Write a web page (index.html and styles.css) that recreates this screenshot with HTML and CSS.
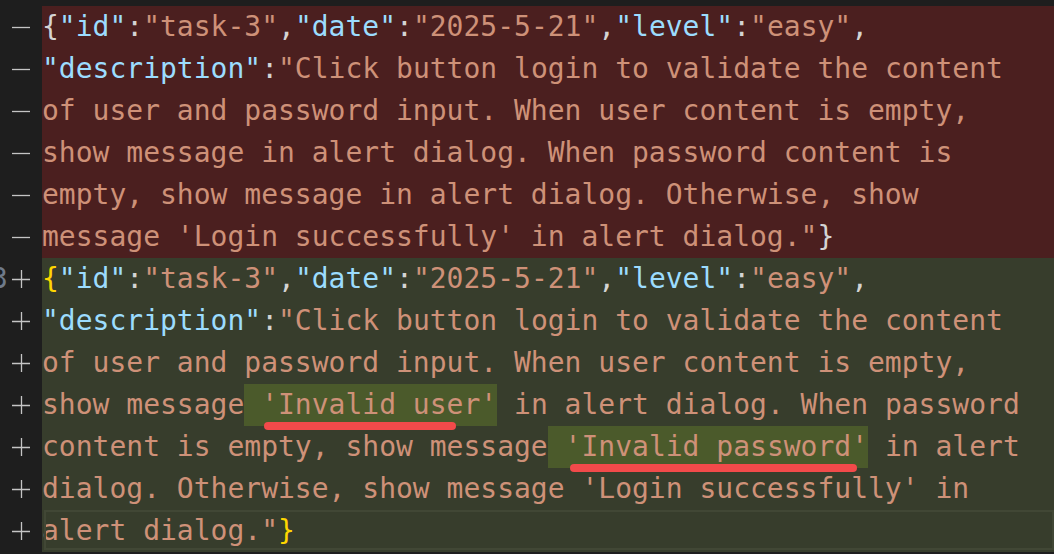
FILE: index.html
```html
<!DOCTYPE html>
<html lang="en">
<head>
<meta charset="UTF-8">
<meta name="viewport" content="width=device-width, initial-scale=1.0">
<title>Diff - tasks.jsonl</title>
<link rel="stylesheet" href="styles.css">
</head>
<body>

<div class="diff">
  <!-- removed lines -->
  <div class="row del">
    <div class="gutter"><svg class="sign" width="18" height="18" viewBox="0 0 18 18"><path d="M0 9.5H18"/></svg></div>
    <div class="code"><span class="p">{</span><span class="k">"id"</span><span class="p">:</span><span class="s">"task-3"</span><span class="p">,</span><span class="k">"date"</span><span class="p">:</span><span class="s">"2025-5-21"</span><span class="p">,</span><span class="k">"level"</span><span class="p">:</span><span class="s">"easy"</span><span class="p">,</span></div>
  </div>
  <div class="row del">
    <div class="gutter"><svg class="sign" width="18" height="18" viewBox="0 0 18 18"><path d="M0 9.5H18"/></svg></div>
    <div class="code"><span class="k">"description"</span><span class="p">:</span><span class="s">"Click button login to validate the content</span></div>
  </div>
  <div class="row del">
    <div class="gutter"><svg class="sign" width="18" height="18" viewBox="0 0 18 18"><path d="M0 9.5H18"/></svg></div>
    <div class="code"><span class="s">of user and password input. When user content is empty,</span></div>
  </div>
  <div class="row del">
    <div class="gutter"><svg class="sign" width="18" height="18" viewBox="0 0 18 18"><path d="M0 9.5H18"/></svg></div>
    <div class="code"><span class="s">show message in alert dialog. When password content is</span></div>
  </div>
  <div class="row del">
    <div class="gutter"><svg class="sign" width="18" height="18" viewBox="0 0 18 18"><path d="M0 9.5H18"/></svg></div>
    <div class="code"><span class="s">empty, show message in alert dialog. Otherwise, show</span></div>
  </div>
  <div class="row del">
    <div class="gutter"><svg class="sign" width="18" height="18" viewBox="0 0 18 18"><path d="M0 9.5H18"/></svg></div>
    <div class="code"><span class="s">message 'Login successfully' in alert dialog."</span><span class="p">}</span></div>
  </div>

  <!-- added lines -->
  <div class="row add">
    <div class="gutter"><span class="num">3</span><svg class="sign" width="18" height="18" viewBox="0 0 18 18"><path d="M0 9.5H18M9.5 0V18"/></svg></div>
    <div class="code"><span class="b">{</span><span class="k">"id"</span><span class="p">:</span><span class="s">"task-3"</span><span class="p">,</span><span class="k">"date"</span><span class="p">:</span><span class="s">"2025-5-21"</span><span class="p">,</span><span class="k">"level"</span><span class="p">:</span><span class="s">"easy"</span><span class="p">,</span></div>
  </div>
  <div class="row add">
    <div class="gutter"><svg class="sign" width="18" height="18" viewBox="0 0 18 18"><path d="M0 9.5H18M9.5 0V18"/></svg></div>
    <div class="code"><span class="k">"description"</span><span class="p">:</span><span class="s">"Click button login to validate the content</span></div>
  </div>
  <div class="row add">
    <div class="gutter"><svg class="sign" width="18" height="18" viewBox="0 0 18 18"><path d="M0 9.5H18M9.5 0V18"/></svg></div>
    <div class="code"><span class="s">of user and password input. When user content is empty,</span></div>
  </div>
  <div class="row add">
    <div class="gutter"><svg class="sign" width="18" height="18" viewBox="0 0 18 18"><path d="M0 9.5H18M9.5 0V18"/></svg></div>
    <div class="code"><span class="s">show message<span class="hl user"> 'Invalid user'</span> in alert dialog. When password</span></div>
  </div>
  <div class="row add">
    <div class="gutter"><svg class="sign" width="18" height="18" viewBox="0 0 18 18"><path d="M0 9.5H18M9.5 0V18"/></svg></div>
    <div class="code"><span class="s">content is empty, show message<span class="hl pass"> 'Invalid password'</span> in alert</span></div>
  </div>
  <div class="row add">
    <div class="gutter"><svg class="sign" width="18" height="18" viewBox="0 0 18 18"><path d="M0 9.5H18M9.5 0V18"/></svg></div>
    <div class="code"><span class="s">dialog. Otherwise, show message 'Login successfully' in</span></div>
  </div>
  <div class="row add current">
    <div class="gutter"><svg class="sign" width="18" height="18" viewBox="0 0 18 18"><path d="M0 9.5H18M9.5 0V18"/></svg></div>
    <div class="code"><span class="s">alert dialog."</span><span class="b">}</span></div>
  </div>
</div>

</body>
</html>
```

FILE: styles.css
```css
body {
  margin: 0;
  padding: 6px 0 2px;
  background-color: #1e1e1e;
  font-family: "DejaVu Sans Mono", "Liberation Mono", monospace;
  font-size: 28px;
  overflow: hidden;
}

.diff {
  display: flex;
  flex-direction: column;
}

.row {
  display: flex;
  height: 42px;
  line-height: 42px;
}

.gutter {
  width: 42px;
  flex-shrink: 0;
  display: flex;
  align-items: center;
  background-color: #1e1e1e;
  overflow: hidden;
  position: relative;
}

.gutter .sign {
  margin-left: 12px;
  stroke: #c5c5c5;
  stroke-width: 1.3;
  fill: none;
}

.gutter .num {
  color: #6f7a8a;
  margin-left: -9px;
  width: 0;
}

.gutter .num + .sign {
  margin-left: 21px;
}

.code {
  flex: 1;
  white-space: pre;
  color: #d4d4d4;
  position: relative;
}

.del .code {
  background-color: #4b1f1f;
}

.add .code {
  background-color: #373d2c;
}

.current .code::before {
  content: "";
  position: absolute;
  left: 2px;
  top: 0;
  right: 0;
  bottom: 2px;
  border: 2px solid #414735;
}

.k {
  color: #9cdcfe;
}

.s {
  color: #ce9178;
}

.p {
  color: #d4d4d4;
}

.b {
  color: #ffd700;
}

.hl {
  display: inline-block;
  height: 42px;
  background-color: #4b5a2b;
  position: relative;
  z-index: 1;
}

.hl::after {
  content: "";
  position: absolute;
  top: 38px;
  height: 8px;
  border-radius: 4px;
  background-color: #f24a4a;
}

.hl.user::after {
  left: 20px;
  width: 192px;
}

.hl.pass::after {
  left: 22px;
  width: 287px;
}
```
